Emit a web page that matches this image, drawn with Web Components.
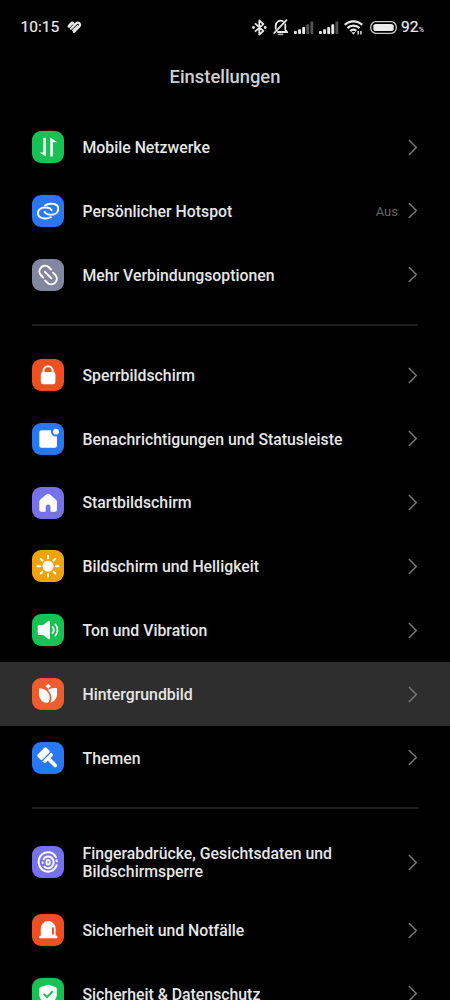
<!DOCTYPE html>
<html lang="de">
<head>
<meta charset="UTF-8">
<meta name="viewport" content="width=device-width, initial-scale=1.0">
<title>Einstellungen</title>
<style>
    html, body {
        margin: 0;
        background: #000;
        height: 1000px;
        overflow: hidden;
    }
    body {
        font-family: Roboto, "Liberation Sans", sans-serif;
        color: #e6e6e6;
    }
</style>
</head>
<body>
<settings-page titulo="Einstellungen">
    <status-bar slot="status" time="10:15" battery="92"></status-bar>
    <settings-group>
        <settings-item icon="network" color="#18c153">Mobile Netzwerke</settings-item>
        <settings-item icon="hotspot" color="#2878f5" value="Aus">Persönlicher Hotspot</settings-item>
        <settings-item icon="link" color="#83869f">Mehr Verbindungsoptionen</settings-item>
    </settings-group>
    <settings-group>
        <settings-item icon="lock" color="#ee5020">Sperrbildschirm</settings-item>
        <settings-item icon="notify" color="#2878f5">Benachrichtigungen und Statusleiste</settings-item>
        <settings-item icon="home" color="#7672ee">Startbildschirm</settings-item>
        <settings-item icon="sun" color="#eda40c">Bildschirm und Helligkeit</settings-item>
        <settings-item icon="sound" color="#18c153">Ton und Vibration</settings-item>
        <settings-item icon="tulip" color="#ed5d30" active>Hintergrundbild</settings-item>
        <settings-item icon="brush" color="#2878f5">Themen</settings-item>
    </settings-group>
    <settings-group>
        <settings-item icon="finger" color="#7672ee" tall>Fingerabdrücke, Gesichtsdaten und Bildschirmsperre</settings-item>
        <settings-item icon="alarm" color="#ee5020">Sicherheit und Notfälle</settings-item>
        <settings-item icon="shield" color="#18c153">Sicherheit &amp; Datenschutz</settings-item>
    </settings-group>
</settings-page>

<script>
// Glyphs on a 32x32 tile; currentColor is white, var(--tile) the tile colour
const ICONS = {
    network: `<path d="M11.3 6.8h2.6v18.8L7.6 21.4h3.7zM18.300 25.600h2.600V11.200h4.300L18.300 6.400z" fill="currentColor"/>`,
    hotspot: `<g fill="none" stroke="currentColor" stroke-width="2" stroke-linecap="round">
        <path d="M13.1 10.5C15.1 8.9 17.7 8.4 20.5 8.8C24.2 9.1 26.4 11.2 26.2 14.2C26 17.6 23 19.8 19 19.8C15.8 19.8 13.6 18.7 12.4 16.8"/>
        <path d="M18.9 22.2C16.8 23.4 14.5 23.8 12 23.4C8.2 23 5.8 21 5.9 17.9C6 14.6 9 12.6 12.9 12.5C16.2 12.4 18.7 13.5 19.7 15.4"/></g>`,
    link: `<g fill="none" stroke="currentColor" stroke-width="2" stroke-linecap="round">
        <path d="M11.300 18.600L9 16.300A5.600 5.600 0 0 1 16.600 8.100L19 10.500"/>
        <path d="M21 13.600L23.200 15.800A5.600 5.600 0 0 1 15.600 24L13.200 21.600"/>
        <path d="M12.900 12.900L19.400 19.400"/></g>`,
    lock: `<path d="M11.5 14v-2.1a4.6 4.6 0 0 1 9.2 0V14" fill="none" stroke="currentColor" stroke-width="2.1"/>
        <rect x="8.8" y="13" width="14.6" height="12.3" rx="2.4" fill="currentColor"/>`,
    notify: `<path d="M9.3 7.3H19a5 5 0 0 0 5.9 6V22.8a2 2 0 0 1-2 2H9.3a2 2 0 0 1-2-2V9.3a2 2 0 0 1 2-2z" fill="currentColor"/>
        <circle cx="24" cy="8.7" r="2.9" fill="currentColor"/>`,
    home: `<path d="M14.3 7.6a2.8 2.8 0 0 1 3.6 0l5.9 5a3 3 0 0 1 1.1 2.3v7.9a2 2 0 0 1-2 2h-4.400v-4.700a2.400 2.600 0 0 0-4.800 0v4.700H9.3a2 2 0 0 1-2-2v-7.9a3 3 0 0 1 1.1-2.3z" fill="currentColor"/>`,
    sun: `<circle cx="16" cy="16.2" r="5.5" fill="currentColor"/>
        <path d="M16 5.8v2.6M16 24v2.6M5.6 16.2h2.6M23.8 16.2h2.6M8.7 8.9l1.8 1.8M21.5 21.7l1.8 1.8M23.3 8.9l-1.8 1.8M10.5 21.7l-1.8 1.8" stroke="currentColor" stroke-width="1.900" stroke-linecap="round"/>`,
    sound: `<path d="M7.3 11h3.8l5.2-3.9c.8-.6 1.7-.2 1.7.8v16.2c0 1-.9 1.4-1.7.8L11.1 21H7.3a1.6 1.6 0 0 1-1.6-1.6v-6.8A1.6 1.6 0 0 1 7.3 11z" fill="currentColor"/>
        <path d="M20.5 13a4.500 4.500 0 0 1 0 6M23.3 10.300a8.500 8.500 0 0 1 0 11.400" fill="none" stroke="currentColor" stroke-width="1.700" stroke-linecap="round"/>`,
    tulip: `<path d="M7 10.200c4.600.1 8.900 2.500 10.300 6.800c1 3.200.4 6.300-1.600 8.100C10.500 24.900 7 21.200 7 16z" fill="currentColor"/>
        <path d="M15.800 11.900c2.500-1.500 5.600-2 9.200-1.700V16c0 4.300-2.400 7.500-6.500 8.700c1.700-3.900 1.300-9-2.700-12.800z" fill="currentColor"/>
        <path d="M16.200 6.300l2.300 1.800-2.300 2.200-2.300-2z" fill="currentColor" stroke="currentColor" stroke-width=".6"/>`,
    brush: `<g transform="translate(14.300 14.500) rotate(-45)" fill="currentColor">
        <rect x="-6.300" y="-7.500" width="12.600" height="7" rx="1.600"/>
        <path d="M-6.300.7H6.300V2A2 2 0 0 1 4.300 4H1.900v8.700a1.900 1.900 0 0 1-3.800 0V4h-2.400a2 2 0 0 1-2-2z"/></g>`,
    finger: `<g fill="none" stroke="currentColor" stroke-width="2" stroke-linecap="round">
        <path d="M23.900 11.200A9.200 9.700 0 1 0 24.500 19.300"/>
        <path d="M24.500 14.200L24.900 15.500"/>
        <path d="M11.500 13.200A5.500 5.900 0 1 1 12.300 20.600"/>
        <path d="M10.700 16.600v.3"/>
        <rect x="14.500" y="13.800" width="3.200" height="4.700" rx="1.600" stroke-width="1.800"/></g>`,
    alarm: `<path d="M8.800 21.800V14.700a7.400 7.800 0 0 1 14.800 0v7.100h1a.7.700 0 0 1 .7.700v1a.7.700 0 0 1-.7.700H7.900a.7.700 0 0 1-.7-.7v-1a.7.700 0 0 1 .7-.7z" fill="currentColor"/>
        <rect x="20" y="13.200" width="1.900" height="7.600" rx=".95" fill="var(--tile)"/>`,
    shield: `<path d="M15 6.900a3 3 0 0 1 2.1 0l6.4 2.2a1.900 1.900 0 0 1 1.3 1.8v5.300c0 5-3.500 8-7.700 9.900a2.500 2.500 0 0 1-2.100 0c-4.200-1.900-7.700-4.900-7.700-9.900v-5.300a1.900 1.900 0 0 1 1.300-1.800z" fill="currentColor"/>
        <path d="M11.700 16l3.400 3.200 5.700-6.100" fill="none" stroke="var(--tile)" stroke-width="2"/>`
};

class StatusBar extends HTMLElement {
    constructor() {
        super();
        this.attachShadow({ mode: 'open' });
    }

    connectedCallback() {
        this.render();
    }

    // strength: number of lit bars out of five
    signal(strength) {
        let bars = '';
        for (let i = 0; i < 5; i++) {
            const h = [3, 4.8, 7, 9.8, 12.5][i];
            bars += `<rect x="${i * 4.1}" y="${13 - h}" width="2.9" height="${h}" rx=".8" fill="${i < strength ? '#e8e8e8' : '#515151'}"/>`;
        }
        return `<svg width="20" height="13" viewBox="0 0 20 13">${bars}</svg>`;
    }

    render() {
        this.shadowRoot.innerHTML = `
        <style>
            :host {
                display: flex;
                align-items: center;
                height: 54px;
                padding: 0 25px 0 20.5px;
                box-sizing: border-box;
                color: #ececec;
            }
            svg { display: block; flex: none; }
            .time { font-size: 15.5px; width: 46.5px; -webkit-text-stroke: .2px; }
            .icons { display: flex; align-items: center; margin-left: auto; }
            .signal { display: flex; gap: 5px; margin: 0 5.5px 0 5.5px; }
            .wifi { margin: 0 7px 0 0; }
            .percent { display: flex; align-items: baseline; margin-left: 4px; font-size: 15.5px; width: 24px; -webkit-text-stroke: .2px; }
            small { font-size: 7.5px; color: #bbb; }
        </style>
        <span class="time">${this.getAttribute('time')}</span>
        <svg width="15" height="13" viewBox="0 0 15 13" fill="none" stroke="#e8e8e8" stroke-linecap="round">
            <path d="M2 5.300L4.500 2.500Q5.300 1.700 6.100 2.300" stroke-width="2.900"/>
            <path d="M3.900 7.700L9.200 2.400Q10.800 1 12.400 2.300Q13.800 3.900 12.300 5.600L7 10.900" stroke-width="2.200"/>
            <path d="M5.900 9.400L10.600 4.700" stroke-width="1.600"/>
        </svg>
        <div class="icons">
            <svg width="15" height="17" viewBox="0 0 15 17" fill="none" stroke="#e8e8e8" stroke-width="1.800">
                <path d="M3 4.300l8.400 7.500L7.300 15.500V1.500l4.100 3.700L3 12.700" stroke-linejoin="round"/>
                <circle cx="1.500" cy="8.500" r="1.400" fill="#e8e8e8" stroke="none"/>
                <circle cx="13.200" cy="8.500" r="1.400" fill="#e8e8e8" stroke="none"/>
            </svg>
            <svg style="margin-left:6px" width="15" height="17" viewBox="0 0 15 17" fill="none" stroke="#e8e8e8" stroke-width="1.800" stroke-linecap="round">
                <path d="M2.700 9.800V6.800A4.800 5 0 0 1 9.800 2.300M12.300 5.500v5.200l1.700 2.300H5M13.500 1.200L1.200 14"/>
                <path d="M5.500 15.400h4" stroke="#aaa"/>
            </svg>
            <div class="signal">${this.signal(3)}${this.signal(4)}</div>
            <svg class="wifi" width="19" height="15" viewBox="0 0 19 15" fill="none" stroke="#e8e8e8" stroke-width="2.200">
                <path d="M.8 4.900A12.300 12.300 0 0 1 18.200 4.900M3.500 8.100A8.500 8.500 0 0 1 15.500 8.100M6.300 11.100A4.600 4.600 0 0 1 12.300 10.800"/>
                <path d="M7.300 12.200h4.200L9.400 14.500z" fill="#e8e8e8" stroke="none"/>
                <path d="M14.200 11v3.400M16.900 11v3.400" stroke-width="1.400"/>
            </svg>
            <svg width="27" height="13" viewBox="0 0 27 13">
                <rect x=".7" y=".7" width="25.600" height="11.600" rx="5.400" fill="none" stroke="#ccc" stroke-width="1.300"/>
                <rect x="3.300" y="2.900" width="20.400" height="7.200" rx="2.600" fill="#ececec"/>
            </svg>
            <span class="percent"><span>${this.getAttribute('battery')}</span><small>%</small></span>
        </div>
        `;
    }
}

class SettingsPage extends HTMLElement {
    constructor() {
        super();
        this.attachShadow({ mode: 'open' });
    }

    connectedCallback() {
        this.shadowRoot.innerHTML = `
        <style>
            :host { display: block; width: 450px; height: 1000px; overflow: hidden; }
            h1 {
                margin: 0;
                height: 61.3px;
                line-height: 45px;
                box-sizing: border-box;
                text-align: center;
                font-size: 18.35px;
                font-weight: 500;
                color: #cfcfcf;
            }
        </style>
        <slot name="status"></slot>
        <h1>${this.getAttribute('titulo')}</h1>
        <slot></slot>
        `;
    }
}

class SettingsGroup extends HTMLElement {
    constructor() {
        super();
        this.attachShadow({ mode: 'open' });
    }

    connectedCallback() {
        this.shadowRoot.innerHTML = `
        <style>
            :host { display: block; }
            /* separator above every group but the first */
            :host(:not(:first-of-type))::before {
                content: "";
                display: block;
                height: 1.5px;
                margin: 17.5px 32px;
                background: #1f1f1f;
            }
        </style>
        <slot></slot>
        `;
    }
}

class SettingsItem extends HTMLElement {
    constructor() {
        super();
        this.attachShadow({ mode: 'open' });
    }

    connectedCallback() {
        this.render();
    }

    render() {
        const icon = ICONS[this.getAttribute('icon')] || '';
        const color = this.getAttribute('color') || '#777';
        const value = this.getAttribute('value') || '';

        this.shadowRoot.innerHTML = `
        <style>
            :host {
                display: flex;
                align-items: center;
                box-sizing: border-box;
                height: 63.8px;
                padding: 0 32px;
                --tile: ${color};
            }
            :host([tall]) { height: 72px; }
            :host([active]) { background: #2e2e2e; }
            .tile {
                flex: none;
                width: 32px;
                height: 32px;
                border-radius: 9px;
                background: var(--tile);
                color: #fff;
            }
            .label {
                flex: 1;
                margin-left: 18.5px;
                padding-top: 2px;
                max-width: 285px;
                font-size: 15.82px;
                line-height: 18.5px;
                font-weight: 500;
            }
            .value { margin-left: auto; padding-top: 1px; font-size: 13px; color: #666; }
            svg { display: block; }
            .chevron { flex: none; margin-left: 10px; }
            .label + .chevron { margin-left: auto; }
        </style>
        <div class="tile"><svg width="32" height="32" viewBox="0 0 32 32">${icon}</svg></div>
        <div class="label"><slot></slot></div>
        ${value ? `<span class="value">${value}</span>` : ''}
        <svg class="chevron" width="10" height="17" viewBox="0 0 10 17" fill="none" stroke="#777" stroke-width="1.5">
            <path d="M.9 1l7.4 7.5L.9 16"/>
        </svg>
        `;
    }
}

customElements.define('status-bar', StatusBar);
customElements.define('settings-page', SettingsPage);
customElements.define('settings-group', SettingsGroup);
customElements.define('settings-item', SettingsItem);
</script>
</body>
</html>
